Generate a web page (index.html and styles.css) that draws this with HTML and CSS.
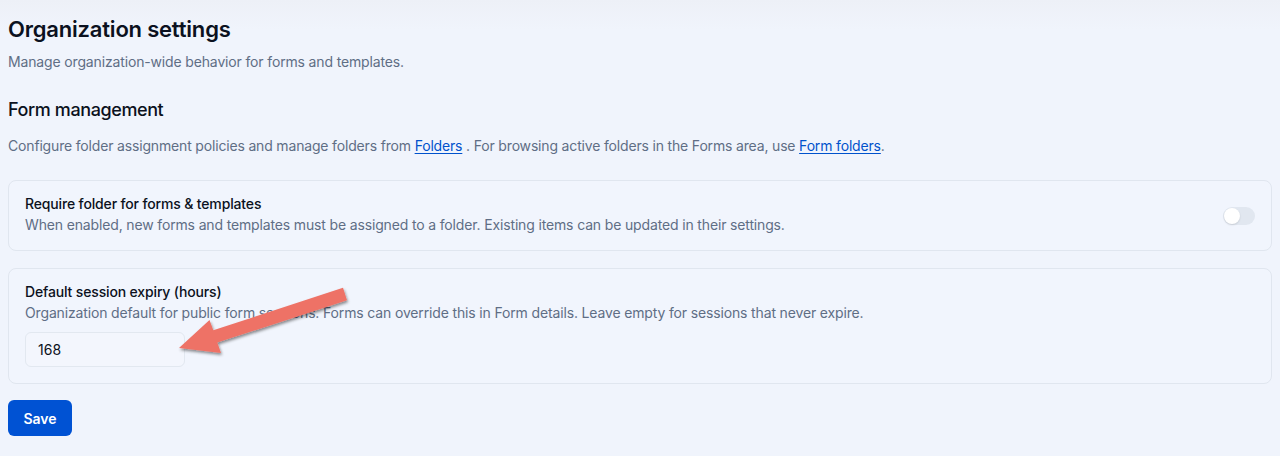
FILE: index.html
```html
<!DOCTYPE html>
<html>
<head>
<meta charset="utf-8">
<link rel="stylesheet" href="styles.css">
</head>
<body>
<main class="page">
  <h1 class="title">Organization settings</h1>
  <p class="subtitle">Manage organization-wide behavior for forms and templates.</p>
  <h2 class="section-title">Form management</h2>
  <p class="section-desc">Configure folder assignment policies and manage folders from <a href="#">Folders</a> . For browsing active folders in the Forms area, use <a href="#">Form folders</a>.</p>

  <div class="card card-row">
    <div class="card-text">
      <div class="card-title">Require folder for forms &amp; templates</div>
      <div class="card-desc">When enabled, new forms and templates must be assigned to a folder. Existing items can be updated in their settings.</div>
    </div>
    <div class="toggle"><span class="knob"></span></div>
  </div>

  <div class="card card-field">
    <div class="card-title">Default session expiry (hours)</div>
    <div class="card-desc">Organization default for public form sessions. Forms can override this in Form details. Leave empty for sessions that never expire.</div>
    <input class="input" type="text" value="168">
  </div>

  <button class="save">Save</button>
</main>

<svg class="arrow" width="1280" height="456" viewBox="0 0 1280 456">
  <defs>
    <filter id="sh" x="-20%" y="-20%" width="140%" height="140%">
      <feDropShadow dx="1" dy="2" stdDeviation="1.6" flood-color="#000" flood-opacity="0.45"/>
    </filter>
  </defs>
  <polygon filter="url(#sh)" fill="#ee7266" points="179,348 209.5,320 213.3,330.3 343,287.8 347,300.2 217.3,342.6 221,353"/>
</svg>
</body>
</html>
```

FILE: styles.css
```css
* { box-sizing: border-box; }
html, body { margin: 0; padding: 0; }
body {
  background: linear-gradient(#edf0f7 0px, #f0f4fc 30px, #f0f4fc 100%);
  font-family: Inter, "Noto Sans", "Liberation Sans", sans-serif;
  color: #0f172a;
  width: 1280px;
  height: 456px;
  overflow: hidden;
  position: relative;
}
.page {
  padding: 13px 8px 0 8px;
  display: flex;
  flex-direction: column;
  align-items: stretch;
}
.title {
  margin: 0;
  font-size: 22px;
  line-height: 32px;
  font-weight: 600;
  letter-spacing: -0.2px;
  color: #0b1120;
}
.subtitle {
  margin: 7px 0 0;
  font-size: 14px;
  line-height: 20px;
  letter-spacing: -0.15px;
  color: #5f6e85;
}
.section-title {
  margin: 24px 0 0;
  font-size: 18px;
  line-height: 28px;
  font-weight: 500;
  letter-spacing: -0.4px;
  color: #0b1120;
}
.section-desc {
  margin: 12px 0 0;
  font-size: 14px;
  line-height: 20px;
  letter-spacing: -0.17px;
  color: #5f6e85;
}
.section-desc a {
  color: #0052cc;
  text-decoration: underline;
  text-underline-offset: 2px;
}
.card {
  border: 1px solid #e0e6ef;
  border-radius: 8px;
  background: #f1f5fd;
  padding: 13px 16px 15px;
  display: flex;
  flex-direction: column;
  margin-top: 24px;
}
.card + .card { margin-top: 17px; }
.card-field { padding-bottom: 16px; }
.card-row {
  flex-direction: row;
  align-items: center;
  justify-content: space-between;
}
.card-title {
  font-size: 14px;
  line-height: 20px;
  font-weight: 500;
  letter-spacing: -0.15px;
  color: #0b1120;
}
.card-desc {
  margin-top: 1px;
  font-size: 14px;
  line-height: 20px;
  letter-spacing: -0.15px;
  color: #5f6e85;
}
.toggle {
  width: 32px;
  height: 18px;
  border-radius: 9px;
  background: #e1e7f0;
  position: relative;
  margin-top: 3px;
}
.knob {
  position: absolute;
  left: 1px;
  top: 1px;
  width: 16px;
  height: 16px;
  border-radius: 50%;
  background: #fff;
  box-shadow: 0 1px 2px rgba(0,0,0,0.12);
}
.input {
  margin-top: 9px;
  width: 160px;
  height: 35px;
  border: 1px solid #e2e8f0;
  border-radius: 6px;
  background: #f3f6fd;
  padding: 0 12px;
  font-family: inherit;
  font-size: 14px;
  color: #0b1120;
  outline: none;
}
.save {
  margin-top: 16px;
  align-self: flex-start;
  width: 64px;
  height: 36px;
  border: none;
  border-radius: 6px;
  background: #0052d3;
  color: #fff;
  font-family: inherit;
  font-size: 14px;
  font-weight: 600;
  cursor: pointer;
}
.arrow {
  position: absolute;
  left: 0;
  top: 0;
  pointer-events: none;
}
```
